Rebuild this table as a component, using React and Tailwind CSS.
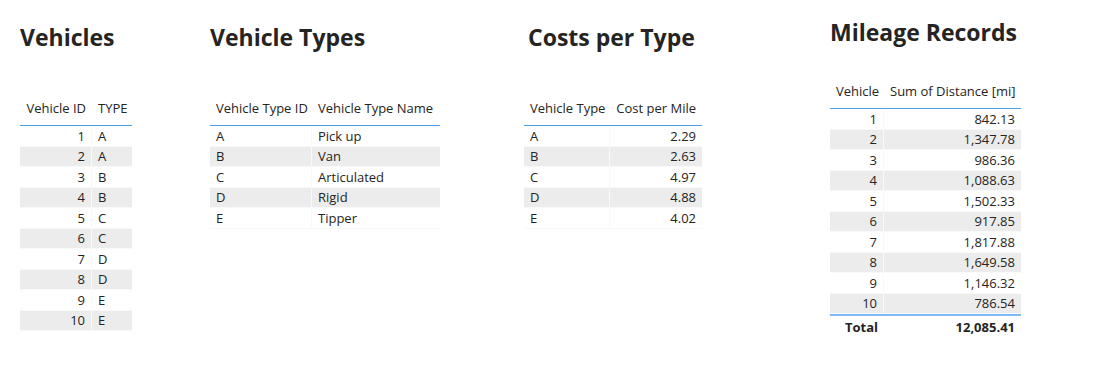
import React from "react";

const vehicles = [
  ["1", "A"], ["2", "A"], ["3", "B"], ["4", "B"], ["5", "C"],
  ["6", "C"], ["7", "D"], ["8", "D"], ["9", "E"], ["10", "E"],
];
const types = [
  ["A", "Pick up"], ["B", "Van"], ["C", "Articulated"], ["D", "Rigid"], ["E", "Tipper"],
];
const costs = [
  ["A", "2.29"], ["B", "2.63"], ["C", "4.97"], ["D", "4.88"], ["E", "4.02"],
];
const mileage = [
  ["1", "842.13"], ["2", "1,347.78"], ["3", "986.36"], ["4", "1,088.63"], ["5", "1,502.33"],
  ["6", "917.85"], ["7", "1,817.88"], ["8", "1,649.58"], ["9", "1,146.32"], ["10", "786.54"],
];

function Table({ cols, rows, total }) {
  return (
    <div className="flex flex-col self-start w-fit text-[13px] text-[#252423]">
      <div className="flex border-b border-[#4a9eea]">
        {cols.map((c, i) => (
          <div
            key={i}
            className={`${c.w} px-[6px] pb-[9px] pt-[1px] leading-[16px] whitespace-nowrap ${c.right ? "text-right" : "text-left"}`}
          >
            {c.label}
          </div>
        ))}
      </div>
      {rows.map((r, ri) => (
        <div
          key={ri}
          className={`flex h-[20.5px] border-b border-[#f9f9f9] ${ri % 2 === 1 ? "bg-[#ececec]" : "bg-white"}`}
        >
          {cols.map((c, i) => (
            <div
              key={i}
              className={`${c.w} px-[6px] flex items-center leading-[16px] whitespace-nowrap ${c.right ? "justify-end" : "justify-start"} ${i < cols.length - 1 ? "border-r border-[#f9f9f9]" : ""}`}
            >
              {r[i]}
            </div>
          ))}
        </div>
      ))}
      {total && (
        <div className="flex border-t-2 border-[#7dbaf3] h-[23px] font-bold">
          {cols.map((c, i) => (
            <div
              key={i}
              className={`${c.w} px-[6px] flex items-center leading-[16px] whitespace-nowrap ${c.right ? "justify-end" : "justify-start"}`}
            >
              {total[i]}
            </div>
          ))}
        </div>
      )}
    </div>
  );
}

function Title({ children }) {
  return (
    <h1 className="text-[23px] leading-[30px] font-bold text-[#252423] whitespace-nowrap">
      {children}
    </h1>
  );
}

export default function App() {
  return (
    <div className="w-[1094px] h-[386px] bg-white font-['Open_Sans',sans-serif] flex pl-[20px]">
      <div className="w-[190px] flex flex-col pt-[22px]">
        <Title>Vehicles</Title>
        <div className="mt-[47px] flex">
          <Table
            cols={[
              { label: "Vehicle ID", w: "w-[72px]", right: true },
              { label: "TYPE", w: "w-[40px]", right: false },
            ]}
            rows={vehicles}
          />
        </div>
      </div>
      <div className="w-[314px] flex flex-col pt-[22px]">
        <Title>Vehicle Types</Title>
        <div className="mt-[47px] flex">
          <Table
            cols={[
              { label: "Vehicle Type ID", w: "w-[102px]", right: false },
              { label: "Vehicle Type Name", w: "w-[128px]", right: false },
            ]}
            rows={types}
          />
        </div>
      </div>
      <div className="w-[306px] flex flex-col pt-[22px]">
        <div className="pl-[4px]">
          <Title>Costs per Type</Title>
        </div>
        <div className="mt-[47px] flex">
          <Table
            cols={[
              { label: "Vehicle Type", w: "w-[86px]", right: false },
              { label: "Cost per Mile", w: "w-[92px]", right: true },
            ]}
            rows={costs}
          />
        </div>
      </div>
      <div className="w-[200px] flex flex-col pt-[17px]">
        <Title>Mileage Records</Title>
        <div className="mt-[35px] flex">
          <Table
            cols={[
              { label: "Vehicle", w: "w-[54px]", right: true },
              { label: "Sum of Distance [mi]", w: "w-[137px]", right: true },
            ]}
            rows={mileage}
            total={["Total", "12,085.41"]}
          />
        </div>
      </div>
    </div>
  );
}
